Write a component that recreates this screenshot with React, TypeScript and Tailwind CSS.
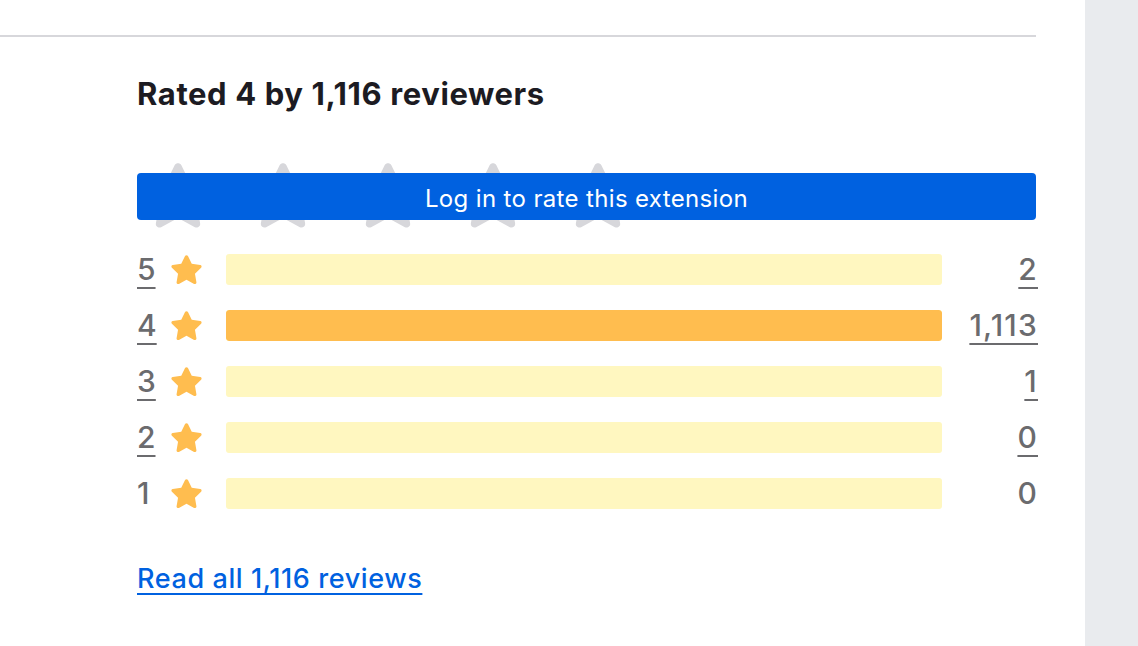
import React from "react";

const StarPath = "M12 2.2c.4 0 .8.2 1 .6l2.6 5.3 5.8.8c.9.1 1.3 1.2.6 1.9l-4.2 4.1 1 5.8c.2.9-.8 1.6-1.6 1.2L12 19.1l-5.2 2.8c-.8.4-1.8-.3-1.6-1.2l1-5.8L2 10.8c-.7-.7-.3-1.8.6-1.9l5.8-.8L11 2.8c.2-.4.6-.6 1-.6z";

function Star({ className }: { className: string }) {
  return (
    <svg viewBox="0 0 24 24" className={className} fill="currentColor">
      <path d={StarPath} />
    </svg>
  );
}

const rows = [
  { n: 5, count: "2", pct: 0, link: true },
  { n: 4, count: "1,113", pct: 100, link: true },
  { n: 3, count: "1", pct: 0, link: true },
  { n: 2, count: "0", pct: 0, link: true },
  { n: 1, count: "0", pct: 0, link: false },
];

export default function App() {
  return (
    <div
      className="flex w-[1138px] h-[646px] bg-white overflow-hidden"
      style={{ fontFamily: "Inter, 'Noto Sans', sans-serif" }}
    >
      <div className="w-[1036px] shrink-0 pt-[35px]">
        <div className="h-[2px] bg-[#d7d7db]" />
        <div className="pl-[137px]">
          <h2 className="mt-[39px] text-[31px] leading-[36px] font-bold text-[#1c1b22] tracking-[0.6px]">
            Rated 4 by 1,116 reviewers
          </h2>
          <div className="relative mt-[51px] h-[65px]">
            <div className="flex gap-[27px] pl-[2px] -translate-y-[7px]">
              {[0, 1, 2, 3, 4].map((i) => (
                <Star key={i} className="w-[78px] h-[78px] shrink-0 text-[#d7d7db]" />
              ))}
            </div>
            <button className="absolute left-0 right-0 top-[10px] h-[47px] rounded-[4px] bg-[#0061e0] text-white text-[24px] leading-[47px] pt-[2px] tracking-[0.35px] text-center">
              Log in to rate this extension
            </button>
          </div>
          <div className="mt-[26px] flex flex-col gap-[25px]">
            {rows.map((r) => (
              <div key={r.n} className="flex items-center h-[31px]">
                <span
                  className={`w-[33px] text-[30px] leading-[31px] font-medium text-[#6b6b6e] ${r.link ? "underline decoration-[2px] underline-offset-[7px]" : ""}`}
                >
                  {r.n}
                </span>
                <Star className="w-[35px] h-[35px] -ml-[1px] text-[#ffbd4f]" />
                <div className="ml-[22px] flex-1 h-[31px] rounded-[3px] bg-[#fff7c0] overflow-hidden">
                  <div className="h-full bg-[#ffbd4f] rounded-[3px]" style={{ width: `${r.pct}%` }} />
                </div>
                <span
                  className={`w-[96px] -mr-[2px] text-right text-[30px] leading-[31px] font-medium tracking-[1.2px] text-[#6b6b6e] ${r.link ? "underline decoration-[2px] underline-offset-[7px]" : ""}`}
                >
                  {r.count}
                </span>
              </div>
            ))}
          </div>
          <a className="inline-block mt-[54px] text-[27px] leading-[32px] font-medium tracking-[0.6px] text-[#0061e0] underline decoration-[2px] underline-offset-[5px]">
            Read all 1,116 reviews
          </a>
        </div>
      </div>
      <div className="w-[49px] shrink-0" />
      <div className="flex-1 bg-[#e9ebee]" />
    </div>
  );
}
